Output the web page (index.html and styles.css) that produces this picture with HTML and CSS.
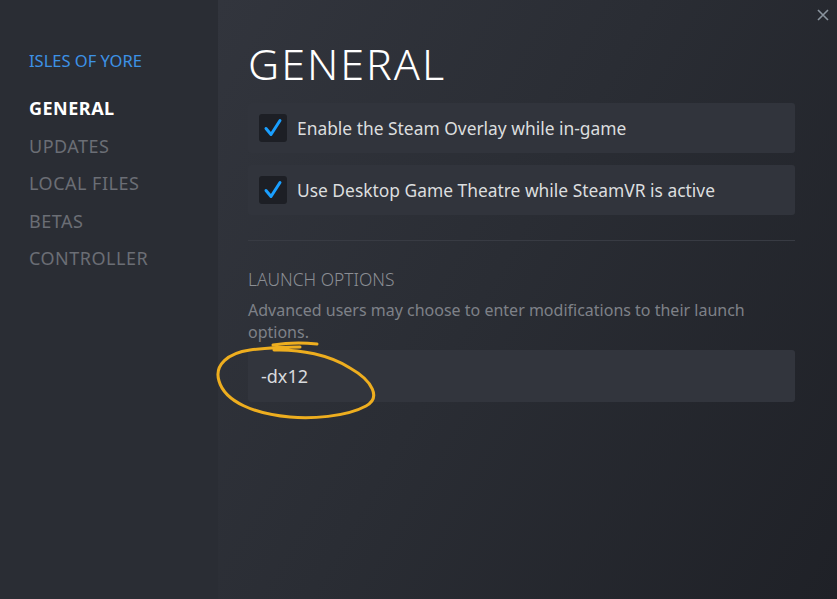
FILE: index.html
```html
<!DOCTYPE html>
<html lang="en">
<head>
  <meta charset="UTF-8" />
  <meta name="viewport" content="width=device-width, initial-scale=1.0"/>
  <title>Isles of Yore - Properties</title>
  <link rel="stylesheet" href="styles.css">
</head>
<body>
  <div class="window">
    <nav class="sidebar">
      <div class="game-title">ISLES OF YORE</div>
      <ul class="nav">
        <li class="active">GENERAL</li>
        <li>UPDATES</li>
        <li>LOCAL FILES</li>
        <li>BETAS</li>
        <li>CONTROLLER</li>
      </ul>
    </nav>

    <main class="content">
      <button class="close" title="Close">
        <svg width="12" height="12" viewBox="0 0 12 12">
          <path d="M1 1 L11 11 M11 1 L1 11" stroke="currentColor" stroke-width="1.6" fill="none"/>
        </svg>
      </button>

      <h1>GENERAL</h1>

      <label class="option">
        <span class="checkbox">
          <svg width="20" height="20" viewBox="0 0 20 20">
            <path d="M3 10.5 L8 16.5 L17 2.5" stroke="#1a9fff" stroke-width="3" fill="none" stroke-linecap="round" stroke-linejoin="round"/>
          </svg>
        </span>
        Enable the Steam Overlay while in-game
      </label>

      <label class="option">
        <span class="checkbox">
          <svg width="20" height="20" viewBox="0 0 20 20">
            <path d="M3 10.5 L8 16.5 L17 2.5" stroke="#1a9fff" stroke-width="3" fill="none" stroke-linecap="round" stroke-linejoin="round"/>
          </svg>
        </span>
        Use Desktop Game Theatre while SteamVR is active
      </label>

      <div class="divider"></div>

      <h2>LAUNCH OPTIONS</h2>
      <p class="hint">Advanced users may choose to enter modifications to their launch options.</p>

      <div class="launch">
        <input type="text" class="launch-input" value="-dx12">
        <!-- marker scribble drawn over the screenshot -->
        <svg class="scribble" width="175" height="85" viewBox="0 0 175 85">
          <path d="M107 6 C90 4 75 5 63 7" />
          <path d="M64 12 C90 11 120 17 140 30 C163 43 171 60 156 68 C136 79 100 81 80 79 C45 76 15 64 9 43 C4 27 18 15 40 12 C55 10 70 9 90 9" />
        </svg>
      </div>
    </main>
  </div>
</body>
</html>
```

FILE: styles.css
```css
html, body {
  margin: 0;
  height: 100%;
}

body {
  font-family: "Noto Sans", Arial, sans-serif;
  background-color: #23252b;
}

.window {
  display: flex;
  height: 100%;
}

.sidebar {
  width: 218px;
  flex-shrink: 0;
  background-color: #2a2d34;
  padding: 50px 0 0 29px;
  box-sizing: border-box;
}

.game-title {
  color: #3d92e6;
  font-size: 16.5px;
  line-height: 22px;
  margin-bottom: 25px;
}

.nav {
  list-style: none;
  margin: 0;
  padding: 0;
}

.nav li {
  color: #6b6e75;
  font-size: 18px;
  letter-spacing: 0.5px;
  line-height: 22px;
  margin-bottom: 15.5px;
}

.nav li.active {
  color: #ffffff;
  font-weight: bold;
}

.content {
  position: relative;
  flex: 1;
  padding: 36px 42px 0 30px;
  background: linear-gradient(120deg, #32353d 0%, #2a2d34 45%, #1f2127 100%);
}

.close {
  position: absolute;
  top: 9px;
  right: 8px;
  background: none;
  border: none;
  padding: 0;
  color: #8a949e;
  cursor: pointer;
}

h1 {
  margin: 0 0 11px;
  color: #ffffff;
  font-size: 43px;
  font-weight: 300;
  letter-spacing: 2px;
  line-height: 56px;
}

.option {
  display: flex;
  align-items: center;
  height: 50px;
  padding-left: 11px;
  margin-bottom: 12px;
  background-color: #31343c;
  border-radius: 3px;
  color: #dcdedf;
  font-size: 17.4px;
}

.checkbox {
  display: flex;
  align-items: center;
  justify-content: center;
  width: 28px;
  height: 28px;
  margin-right: 10px;
  background-color: #1d1f25;
  border-radius: 3px;
}

.divider {
  height: 1px;
  background-color: #383b43;
  margin-top: 25px;
}

h2 {
  margin: 26px 0 0;
  color: #8b8e94;
  font-size: 17.4px;
  font-weight: 300;
  line-height: 24px;
}

.hint {
  margin: 8px 0 0;
  color: #7e8188;
  font-size: 16px;
  line-height: 22px;
}

.launch {
  position: relative;
  margin-top: 7px;
}

.launch-input {
  display: block;
  width: 100%;
  height: 52px;
  box-sizing: border-box;
  padding: 0 13px;
  background-color: #32353d;
  border: none;
  border-radius: 3px;
  color: #d8dadd;
  font-family: "Noto Sans", Arial, sans-serif;
  font-size: 18px;
  outline: none;
}

.scribble {
  position: absolute;
  left: -38px;
  top: -12px;
  overflow: visible;
}

.scribble path {
  fill: none;
  stroke: #eeae1f;
  stroke-width: 3;
  stroke-linecap: round;
}
```
